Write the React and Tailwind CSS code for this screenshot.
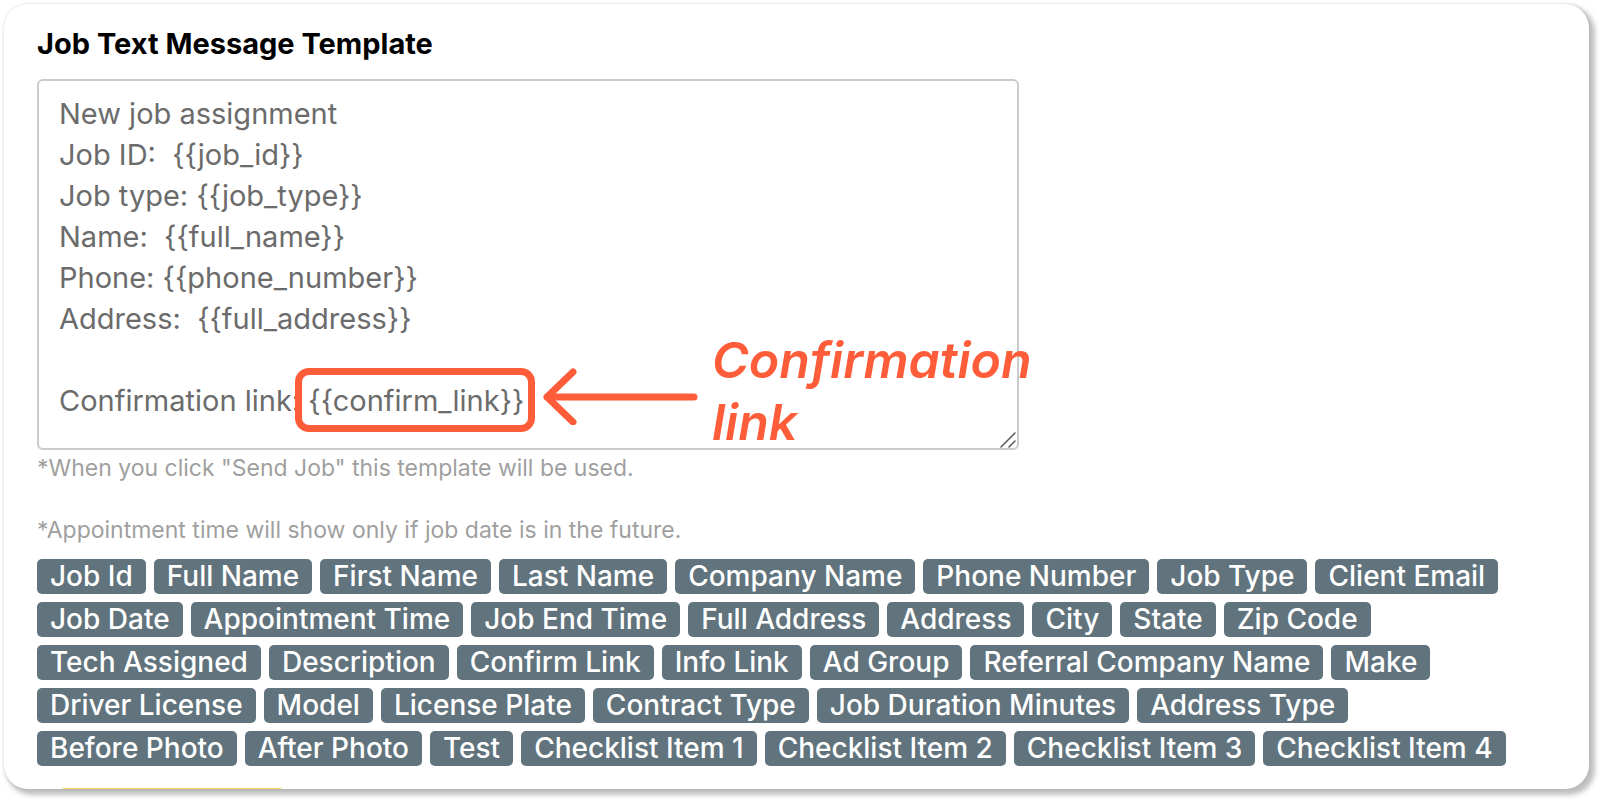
const template = `New job assignment
Job ID:  {{job_id}}
Job type: {{job_type}}
Name:  {{full_name}}
Phone: {{phone_number}}
Address:  {{full_address}}

Confirmation link: {{confirm_link}}`;

const tags = [
  'Job Id', 'Full Name', 'First Name', 'Last Name', 'Company Name', 'Phone Number', 'Job Type', 'Client Email',
  'Job Date', 'Appointment Time', 'Job End Time', 'Full Address', 'Address', 'City', 'State', 'Zip Code',
  'Tech Assigned', 'Description', 'Confirm Link', 'Info Link', 'Ad Group', 'Referral Company Name', 'Make',
  'Driver License', 'Model', 'License Plate', 'Contract Type', 'Job Duration Minutes', 'Address Type',
  'Before Photo', 'After Photo', 'Test', 'Checklist Item 1', 'Checklist Item 2', 'Checklist Item 3', 'Checklist Item 4',
];

export default function App() {
  return (
    <div className="flex h-screen bg-white pt-1 pr-[11px] pb-[11px] pl-1 font-['Inter',sans-serif]">
      <main className="flex flex-1 flex-col overflow-hidden rounded-[24px] bg-white px-[33px] shadow-[4px_4px_5px_2px_rgba(0,0,0,0.25),0_0_3px_rgba(0,0,0,0.1)]">
        <label htmlFor="template" className="mt-5 text-[29px] leading-10 font-bold text-black">
          Job Text Message Template
        </label>

        <div className="relative mt-[15px] w-[982px] max-w-full shrink-0">
          <textarea
            id="template"
            rows={8}
            defaultValue={template}
            className="block w-full resize-none overflow-hidden rounded-md border-2 border-[#cbcbcb] bg-white px-5 pt-3 pb-[27px] text-[29px] leading-[41px] text-[#6b6b6b] outline-none"
          />
          <div className="pointer-events-none absolute top-[289px] left-[258px] h-16 w-[240px] rounded-[14px] border-[7px] border-[#ff5c39]" />
          <svg className="pointer-events-none absolute top-[288px] left-[505px] h-[58px] w-[156px]" viewBox="0 0 156 58" fill="none" stroke="#ff5c39" strokeWidth="7" strokeLinecap="round" strokeLinejoin="round" aria-hidden="true">
            <path d="M152 30H5M31 5 5 30 31 55" />
          </svg>
          <p className="pointer-events-none absolute top-[250px] left-[675px] w-[320px] text-[50px] leading-[62px] font-semibold text-[#ff5c39] italic">
            Confirmation link
          </p>
          <svg className="pointer-events-none absolute right-[3px] bottom-[2px] h-4 w-4" viewBox="0 0 16 16" stroke="#555" strokeWidth="1.5" strokeLinecap="round" aria-hidden="true">
            <path d="M1 15 15 1M9 15l6-6" />
          </svg>
        </div>

        <p className="text-[23px] leading-9 text-[#9f9f9f]">*When you click "Send Job" this template will be used.</p>
        <p className="mt-[26px] text-[23px] leading-9 text-[#9f9f9f]">*Appointment time will show only if job date is in the future.</p>

        <div className="mt-[11px] flex flex-wrap gap-2 pr-5">
          {tags.map((tag) => (
            <button key={tag} type="button" className="h-[35px] rounded-[5px] bg-[#61737d] px-[13px] text-[28px] leading-[35px] font-medium text-white">
              {tag}
            </button>
          ))}
        </div>

        <div className="mt-[22px] ml-5 h-12 w-[230px] shrink-0 rounded-lg bg-[#f7d558]" />
      </main>
    </div>
  );
}
